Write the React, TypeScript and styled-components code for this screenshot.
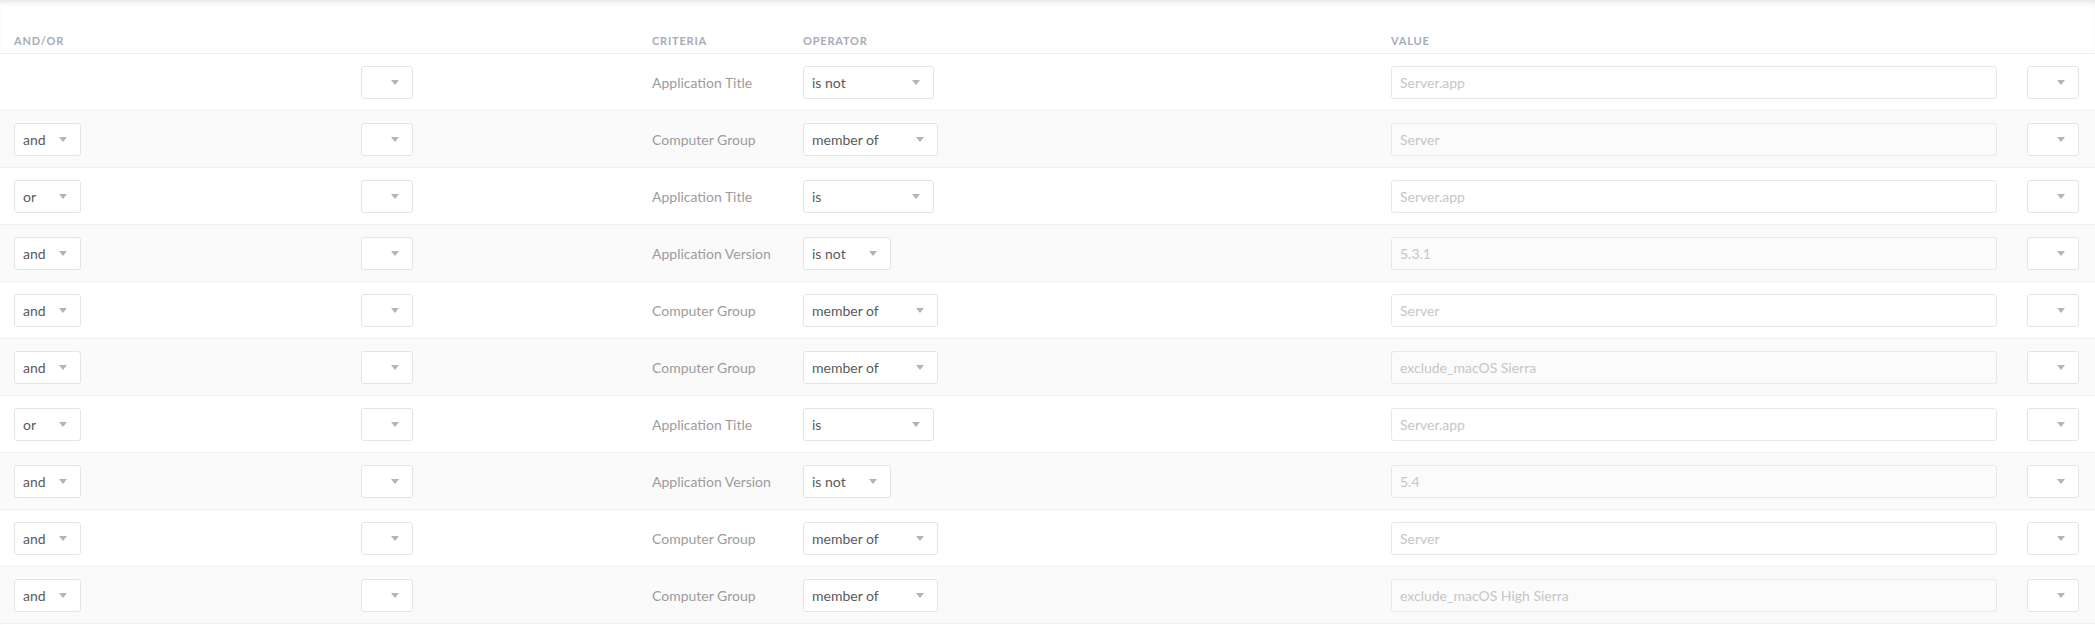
import styled, { createGlobalStyle } from 'styled-components';

// Global page reset
const GlobalStyle = createGlobalStyle`
  html, body {
    margin: 0;
    padding: 0;
    background: #ffffff;
  }
  body {
    font-family: Lato, "Open Sans", "Liberation Sans", sans-serif;
    -webkit-font-smoothing: antialiased;
  }
`;

// Layout
const Panel = styled.div`
  width: 2095px;
  height: 625px;
  overflow: hidden;
  background: #ffffff;
  box-shadow: inset 0 5px 6px -4px rgba(60, 70, 100, 0.2);
`;

const COLUMNS = '347px 291px 151px 588px 1fr 52px';

const HeaderRow = styled.div`
  display: grid;
  grid-template-columns: ${COLUMNS};
  align-items: end;
  height: 54px;
  padding: 0 16px 0 14px;
  border-bottom: 1px solid #efeff1;
  box-sizing: border-box;
`;

const HeaderCell = styled.div`
  padding-bottom: 6px;
  font-size: 11px;
  font-weight: 700;
  letter-spacing: 0.8px;
  text-transform: uppercase;
  color: #a6abb8;
`;

const Row = styled.div<{ $alt: boolean }>`
  display: grid;
  grid-template-columns: ${COLUMNS};
  align-items: center;
  height: 57px;
  padding: 0 16px 0 14px;
  box-sizing: border-box;
  border-bottom: 1px solid #efeff1;
  background: ${(p) => (p.$alt ? '#fafafa' : '#ffffff')};
`;

const Cell = styled.div`
  display: flex;
  align-items: center;
  min-width: 0;
`;

const ValueCell = styled(Cell)`
  padding-right: 30px;
`;

// Controls
const Select = styled.div<{ $width: number }>`
  display: flex;
  align-items: center;
  justify-content: space-between;
  width: ${(p) => p.$width}px;
  height: 33px;
  box-sizing: border-box;
  padding: 0 13px 0 8px;
  background: #ffffff;
  border: 1px solid #e4e4e6;
  border-radius: 3px;
  font-size: 14px;
  color: #5a5a5a;
`;

const Caret = styled.span`
  width: 0;
  height: 0;
  margin-left: auto;
  border-left: 4px solid transparent;
  border-right: 4px solid transparent;
  border-top: 5px solid #b4b4b4;
`;

const Criteria = styled.span`
  font-size: 14px;
  color: #9c9c9c;
`;

const ValueInput = styled.div<{ $alt: boolean }>`
  display: flex;
  align-items: center;
  width: 100%;
  height: 33px;
  box-sizing: border-box;
  padding-left: 8px;
  border: 1px solid #e8e8ea;
  border-radius: 3px;
  background: ${(p) => (p.$alt ? '#fbfbfb' : '#ffffff')};
  font-size: 14px;
  color: #c6c6c6;
`;

interface CriteriaRow {
  andOr?: string;
  criteria: string;
  operator: string;
  operatorWidth: number;
  value: string;
}

const rows: CriteriaRow[] = [
  { criteria: 'Application Title', operator: 'is not', operatorWidth: 131, value: 'Server.app' },
  { andOr: 'and', criteria: 'Computer Group', operator: 'member of', operatorWidth: 135, value: 'Server' },
  { andOr: 'or', criteria: 'Application Title', operator: 'is', operatorWidth: 131, value: 'Server.app' },
  { andOr: 'and', criteria: 'Application Version', operator: 'is not', operatorWidth: 88, value: '5.3.1' },
  { andOr: 'and', criteria: 'Computer Group', operator: 'member of', operatorWidth: 135, value: 'Server' },
  { andOr: 'and', criteria: 'Computer Group', operator: 'member of', operatorWidth: 135, value: 'exclude_macOS Sierra' },
  { andOr: 'or', criteria: 'Application Title', operator: 'is', operatorWidth: 131, value: 'Server.app' },
  { andOr: 'and', criteria: 'Application Version', operator: 'is not', operatorWidth: 88, value: '5.4' },
  { andOr: 'and', criteria: 'Computer Group', operator: 'member of', operatorWidth: 135, value: 'Server' },
  { andOr: 'and', criteria: 'Computer Group', operator: 'member of', operatorWidth: 135, value: 'exclude_macOS High Sierra' },
];

export default function App() {
  return (
    <>
      <GlobalStyle />
      <Panel>
        <HeaderRow>
          <HeaderCell>And/Or</HeaderCell>
          <HeaderCell />
          <HeaderCell>Criteria</HeaderCell>
          <HeaderCell>Operator</HeaderCell>
          <HeaderCell>Value</HeaderCell>
          <HeaderCell />
        </HeaderRow>
        {rows.map((row, i) => {
          const alt = i % 2 === 1;
          return (
            <Row key={i} $alt={alt}>
              <Cell>
                {row.andOr && (
                  <Select $width={67}>
                    {row.andOr}
                    <Caret />
                  </Select>
                )}
              </Cell>
              <Cell>
                <Select $width={52}>
                  <Caret />
                </Select>
              </Cell>
              <Cell>
                <Criteria>{row.criteria}</Criteria>
              </Cell>
              <Cell>
                <Select $width={row.operatorWidth}>
                  {row.operator}
                  <Caret />
                </Select>
              </Cell>
              <ValueCell>
                <ValueInput $alt={alt}>{row.value}</ValueInput>
              </ValueCell>
              <Cell>
                <Select $width={52}>
                  <Caret />
                </Select>
              </Cell>
            </Row>
          );
        })}
      </Panel>
    </>
  );
}
